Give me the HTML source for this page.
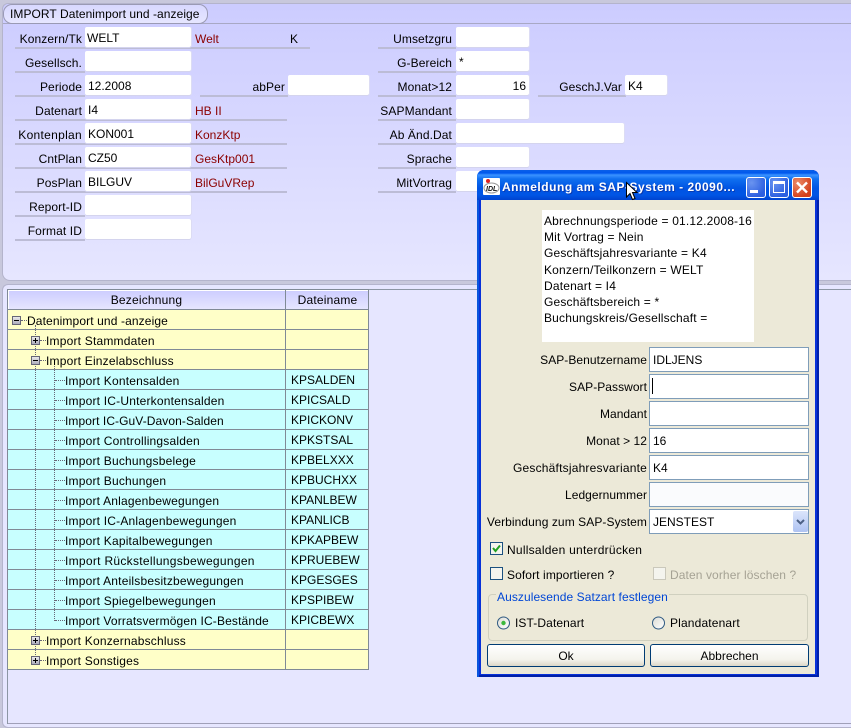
<!DOCTYPE html>
<html><head><meta charset="utf-8"><style>
html,body{margin:0;padding:0;width:851px;height:728px;overflow:hidden;background:#c8c8dc}
body{position:relative;font:12px "Liberation Sans",sans-serif;color:#000}
div,span{position:absolute;box-sizing:border-box;white-space:nowrap}
.l{height:20px;line-height:20px;text-align:right;letter-spacing:.1px}
.u{height:2px;background:#bcbcd6}
.f{height:20px;background:#fff;border-radius:2px;line-height:22px;padding-left:3px;box-shadow:0 1px 0 #d4d4ee,1px 0 0 #dcdcf4}
.r{color:#8b0000;height:20px;line-height:20px}
.row{left:8px;width:361px;height:20px;border-bottom:1px solid #808a96;line-height:20px}
.y{background:#ffffc8}.c{background:#c8ffff}
.t{height:20px;line-height:23px;letter-spacing:.2px}
.d{left:291px;height:20px;line-height:21px}
.dl{text-align:right;height:20px;line-height:22px;letter-spacing:.05px}
.tf{left:649px;width:160px;height:25px;background:#fff;border:1px solid #7f9db9;line-height:25px;padding-left:3px}
.h{border-top:1px dotted #667;width:10px}
</style></head><body>
<!-- top panel -->
<div style="left:2px;top:3px;width:849px;height:278px;background:linear-gradient(#ccccff,#e6e6ff);border:1px solid #b4b4cc;border-right:0;border-radius:6px 0 0 8px"></div>
<div style="left:3px;top:23px;width:848px;height:1px;background:#a8a8c4"></div>
<div style="left:3px;top:4px;width:205px;height:20px;background:linear-gradient(#d8d8ff,#e6e6ff);border:1px solid #9a9ab4;border-radius:9px;line-height:19px;padding-left:6px;letter-spacing:.06px">IMPORT Datenimport und -anzeige</div>

<div class="u" style="left:15px;top:47px;width:295px"></div><div class="u" style="left:15px;top:71px;width:70px"></div><div class="u" style="left:15px;top:95px;width:70px"></div><div class="u" style="left:200px;top:95px;width:88px"></div><div class="u" style="left:15px;top:119px;width:272px"></div><div class="u" style="left:15px;top:143px;width:272px"></div><div class="u" style="left:15px;top:167px;width:272px"></div><div class="u" style="left:15px;top:191px;width:272px"></div><div class="u" style="left:15px;top:215px;width:70px"></div><div class="u" style="left:15px;top:239px;width:70px"></div>

<div class="l" style="left:0;width:82px;top:29px">Konzern/Tk</div><div class="f" style="left:85px;top:27px;width:106px;padding-left:2px">WELT</div><div class="r" style="left:195px;top:29px">Welt</div><div class="l" style="left:290px;top:29px">K</div>
<div class="l" style="left:0;width:82px;top:53px">Gesellsch.</div><div class="f" style="left:85px;top:51px;width:106px"></div>
<div class="l" style="left:0;width:82px;top:77px">Periode</div><div class="f" style="left:85px;top:75px;width:106px">12.2008</div>
<div class="l" style="left:200px;width:85px;top:77px">abPer</div><div class="f" style="left:288px;top:75px;width:81px"></div>
<div class="l" style="left:0;width:82px;top:101px">Datenart</div><div class="f" style="left:85px;top:99px;width:106px">I4</div><div class="r" style="left:195px;top:101px">HB II</div>
<div class="l" style="left:0;width:82px;top:125px;letter-spacing:.3px">Kontenplan</div><div class="f" style="left:85px;top:123px;width:106px">KON001</div><div class="r" style="left:195px;top:125px">KonzKtp</div>
<div class="l" style="left:0;width:82px;top:149px">CntPlan</div><div class="f" style="left:85px;top:147px;width:106px">CZ50</div><div class="r" style="left:195px;top:149px">GesKtp001</div>
<div class="l" style="left:0;width:82px;top:173px">PosPlan</div><div class="f" style="left:85px;top:171px;width:106px">BILGUV</div><div class="r" style="left:195px;top:173px">BilGuVRep</div>
<div class="l" style="left:0;width:82px;top:197px">Report-ID</div><div class="f" style="left:85px;top:195px;width:106px"></div>
<div class="l" style="left:0;width:82px;top:221px">Format ID</div><div class="f" style="left:85px;top:219px;width:106px"></div>

<div class="u" style="left:378px;top:47px;width:78px"></div><div class="u" style="left:378px;top:71px;width:78px"></div><div class="u" style="left:378px;top:95px;width:78px"></div><div class="u" style="left:538px;top:95px;width:88px"></div><div class="u" style="left:378px;top:119px;width:78px"></div><div class="u" style="left:378px;top:143px;width:78px"></div><div class="u" style="left:378px;top:167px;width:78px"></div><div class="u" style="left:378px;top:191px;width:78px"></div>
<div class="l" style="left:370px;width:82px;top:29px">Umsetzgru</div><div class="f" style="left:456px;top:27px;width:73px"></div>
<div class="l" style="left:370px;width:82px;top:53px">G-Bereich</div><div class="f" style="left:456px;top:51px;width:73px">*</div>
<div class="l" style="left:370px;width:82px;top:77px">Monat&gt;12</div><div class="f" style="left:456px;top:75px;width:73px;text-align:right;padding-right:3px">16</div>
<div class="l" style="left:540px;width:82px;top:77px">GeschJ.Var</div><div class="f" style="left:625px;top:75px;width:42px">K4</div>
<div class="l" style="left:370px;width:82px;top:101px">SAPMandant</div><div class="f" style="left:456px;top:99px;width:73px"></div>
<div class="l" style="left:370px;width:82px;top:125px">Ab Änd.Dat</div><div class="f" style="left:456px;top:123px;width:168px"></div>
<div class="l" style="left:370px;width:82px;top:149px">Sprache</div><div class="f" style="left:456px;top:147px;width:73px"></div>
<div class="l" style="left:370px;width:82px;top:173px">MitVortrag</div><div class="f" style="left:456px;top:171px;width:73px"></div>

<!-- bottom panel -->
<div style="left:2px;top:284px;width:849px;height:444px;background:#e6e6ff;border:1px solid #b4b4cc;border-right:0;border-radius:6px 0 0 6px"></div>
<div style="left:7px;top:723px;width:844px;height:1px;background:#a0a0b8"></div>
<div style="left:7px;top:289px;width:1px;height:435px;background:#8c96a4"></div>
<div style="left:7px;top:289px;width:844px;height:1px;background:#8c96a4"></div>

<!-- table -->
<div style="left:7px;top:289px;width:362px;height:21px;background:linear-gradient(#ccccff,#e6e6ff);border:1px solid #808a96;box-shadow:inset 1px 1px 0 #fff"></div>
<div style="left:8px;width:277px;top:290px;height:20px;line-height:21px;text-align:center;letter-spacing:.2px">Bezeichnung</div>
<div style="left:286px;width:83px;top:290px;height:20px;line-height:21px;text-align:center;letter-spacing:.2px">Dateiname</div>

<div class="row y" style="top:310px"></div><div class="row y" style="top:330px"></div><div class="row y" style="top:350px"></div>
<div class="row c" style="top:370px"></div><div class="row c" style="top:390px"></div><div class="row c" style="top:410px"></div><div class="row c" style="top:430px"></div><div class="row c" style="top:450px"></div><div class="row c" style="top:470px"></div><div class="row c" style="top:490px"></div><div class="row c" style="top:510px"></div><div class="row c" style="top:530px"></div><div class="row c" style="top:550px"></div><div class="row c" style="top:570px"></div><div class="row c" style="top:590px"></div><div class="row c" style="top:610px"></div>
<div class="row y" style="top:630px"></div><div class="row y" style="top:650px"></div>
<div style="left:7px;top:310px;width:1px;height:360px;background:#808a96"></div>
<div style="left:285px;top:290px;width:1px;height:380px;background:#808a96"></div>
<div style="left:368px;top:290px;width:1px;height:380px;background:#808a96"></div>

<!-- tree lines -->
<div style="left:35px;top:325px;height:336px;border-left:1px dotted #667"></div>
<div style="left:54px;top:366px;height:255px;border-left:1px dotted #667"></div>
<div class="h" style="left:21px;top:320px;width:6px"></div>
<div class="h" style="left:40px;top:340px;width:6px"></div>
<div class="h" style="left:40px;top:360px;width:6px"></div>
<div class="h" style="left:40px;top:640px;width:6px"></div>
<div class="h" style="left:40px;top:660px;width:6px"></div>
<div class="h" style="left:55px;top:380px"></div><div class="h" style="left:55px;top:400px"></div><div class="h" style="left:55px;top:420px"></div><div class="h" style="left:55px;top:440px"></div><div class="h" style="left:55px;top:460px"></div><div class="h" style="left:55px;top:480px"></div><div class="h" style="left:55px;top:500px"></div><div class="h" style="left:55px;top:520px"></div><div class="h" style="left:55px;top:540px"></div><div class="h" style="left:55px;top:560px"></div><div class="h" style="left:55px;top:580px"></div><div class="h" style="left:55px;top:600px"></div><div class="h" style="left:55px;top:620px"></div>

<svg style="position:absolute;left:0;top:0" width="100" height="728">
<defs><linearGradient id="bx" x1="0" y1="0" x2="0" y2="1"><stop offset="0" stop-color="#eee"/><stop offset="1" stop-color="#a8a8b8"/></linearGradient></defs>
<g fill="url(#bx)" stroke="#667"><rect x="12.5" y="316.5" width="8" height="8"/><rect x="31.5" y="336.5" width="8" height="8"/><rect x="31.5" y="356.5" width="8" height="8"/><rect x="31.5" y="636.5" width="8" height="8"/><rect x="31.5" y="656.5" width="8" height="8"/></g>
<path d="M14 320.5h5M33 340.5h5M35.500 338v5M33 360.500h5M33 640.500h5M35.500 638v5M33 660.500h5M35.500 658v5" stroke="#000" fill="none"/>
</svg>

<div class="t" style="left:27px;top:310px;letter-spacing:.12px">Datenimport und -anzeige</div>
<div class="t" style="left:46px;top:330px">Import Stammdaten</div>
<div class="t" style="left:46px;top:350px">Import Einzelabschluss</div>
<div class="t" style="left:65px;top:370px">Import Kontensalden</div><div class="d" style="top:370px">KPSALDEN</div>
<div class="t" style="left:65px;top:390px">Import IC-Unterkontensalden</div><div class="d" style="top:390px">KPICSALD</div>
<div class="t" style="left:65px;top:410px;letter-spacing:.08px">Import IC-GuV-Davon-Salden</div><div class="d" style="top:410px">KPICKONV</div>
<div class="t" style="left:65px;top:430px">Import Controllingsalden</div><div class="d" style="top:430px">KPKSTSAL</div>
<div class="t" style="left:65px;top:450px">Import Buchungsbelege</div><div class="d" style="top:450px">KPBELXXX</div>
<div class="t" style="left:65px;top:470px">Import Buchungen</div><div class="d" style="top:470px">KPBUCHXX</div>
<div class="t" style="left:65px;top:490px">Import Anlagenbewegungen</div><div class="d" style="top:490px">KPANLBEW</div>
<div class="t" style="left:65px;top:510px">Import IC-Anlagenbewegungen</div><div class="d" style="top:510px">KPANLICB</div>
<div class="t" style="left:65px;top:530px">Import Kapitalbewegungen</div><div class="d" style="top:530px">KPKAPBEW</div>
<div class="t" style="left:65px;top:550px;letter-spacing:.3px">Import Rückstellungsbewegungen</div><div class="d" style="top:550px">KPRUEBEW</div>
<div class="t" style="left:65px;top:570px">Import Anteilsbesitzbewegungen</div><div class="d" style="top:570px">KPGESGES</div>
<div class="t" style="left:65px;top:590px">Import Spiegelbewegungen</div><div class="d" style="top:590px">KPSPIBEW</div>
<div class="t" style="left:65px;top:610px;letter-spacing:.15px">Import Vorratsvermögen IC-Bestände</div><div class="d" style="top:610px">KPICBEWX</div>
<div class="t" style="left:46px;top:630px">Import Konzernabschluss</div>
<div class="t" style="left:46px;top:650px">Import Sonstiges</div>

<!-- dialog -->
<div style="left:477px;top:170px;width:342px;height:507px;background:#0831d9;border-radius:7px 7px 0 0;box-shadow:inset 2px 0 0 #0855dd,inset -2px 0 0 #0020a8,inset 0 -2px 0 #0020a8"></div>
<div style="left:477px;top:170px;width:342px;height:30px;border-radius:7px 7px 0 0;background:linear-gradient(#0a5fe8 0,#0058ee 3px,#3a93ff 5px,#0f6ff0 9px,#0054e3 18px,#0055e5 25px,#0043cf 30px)"></div>
<div style="left:481px;top:200px;width:334px;height:474px;background:#ece9d8"></div>
<svg style="position:absolute;left:483px;top:178px" width="17" height="17"><rect width="17" height="17" fill="#fff" rx="1"/><circle cx="5" cy="3" r="2" fill="#e02020"/><ellipse cx="8.500" cy="10" rx="7.500" ry="5" fill="none" stroke="#999"/><text x="3" y="13" font-family="Liberation Sans" font-size="7" font-weight="bold" font-style="italic" fill="#111">IDL</text></svg>
<div style="left:502px;top:177px;height:20px;line-height:21px;color:#fff;font-weight:bold;font-size:12px;letter-spacing:.52px;text-shadow:1px 1px 0 #0a3bb0">Anmeldung am SAP-System - 20090...</div>

<div style="left:746px;top:177px;width:20px;height:21px;border:1px solid #fff;border-radius:3px;background:radial-gradient(circle at 25% 25%,#6a94f0,#2c5fe0 75%)"></div>
<div style="left:750px;top:190px;width:8px;height:3px;background:#fff"></div>
<div style="left:769px;top:177px;width:20px;height:21px;border:1px solid #fff;border-radius:3px;background:radial-gradient(circle at 25% 25%,#6a94f0,#2c5fe0 75%)"></div>
<div style="left:773px;top:181px;width:12px;height:12px;border:1px solid #fff;border-top-width:3px"></div>
<div style="left:792px;top:177px;width:20px;height:21px;border:1px solid #fff;border-radius:3px;background:radial-gradient(circle at 25% 25%,#ec8a68,#d2401c 75%)"></div>
<svg style="position:absolute;left:792px;top:177px" width="20" height="21"><path d="M5 5.500L15 15.500M15 5.500L5 15.500" stroke="#fff" stroke-width="2.400"/></svg>

<div style="left:542px;top:210px;width:212px;height:132px;background:#fff"></div>
<div style="left:544px;top:212px;line-height:16.2px;letter-spacing:.18px;padding-top:1px">Abrechnungsperiode = 01.12.2008-16<br>Mit Vortrag = Nein<br>Geschäftsjahresvariante = K4<br>Konzern/Teilkonzern = WELT<br>Datenart = I4<br>Geschäftsbereich = *<br>Buchungskreis/Gesellschaft =</div>

<div class="dl" style="left:480px;width:167px;top:349px">SAP-Benutzername</div><div class="tf" style="top:347px">IDLJENS</div>
<div class="dl" style="left:480px;width:167px;top:376px">SAP-Passwort</div><div class="tf" style="top:374px"></div><div style="left:652px;top:378px;width:1px;height:16px;background:#000"></div>
<div class="dl" style="left:480px;width:167px;top:403px">Mandant</div><div class="tf" style="top:401px"></div>
<div class="dl" style="left:480px;width:167px;top:430px">Monat &gt; 12</div><div class="tf" style="top:428px">16</div>
<div class="dl" style="left:480px;width:167px;top:457px;letter-spacing:.2px">Geschäftsjahresvariante</div><div class="tf" style="top:455px">K4</div>
<div class="dl" style="left:480px;width:167px;top:484px">Ledgernummer</div><div class="tf" style="top:482px;background:#fafbfd"></div>
<div class="dl" style="left:480px;width:167px;top:511px;letter-spacing:.08px">Verbindung zum SAP-System</div><div class="tf" style="top:509px">JENSTEST</div>
<div style="left:793px;top:511px;width:15px;height:21px;background:linear-gradient(#dbe5fb,#afc3f2);border-radius:2px"></div>
<svg style="position:absolute;left:793px;top:511px" width="15" height="21"><path d="M4 9l3.500 3.500L11 9" fill="none" stroke="#4d6185" stroke-width="2"/></svg>

<div style="left:490px;top:542px;width:13px;height:13px;background:#f4f4ee;border:1px solid #1c5180"></div>
<svg style="position:absolute;left:490px;top:542px" width="13" height="13"><path d="M3 6l2.500 3L10 3.500" fill="none" stroke="#21a121" stroke-width="2"/></svg>
<div style="left:507px;top:539px;height:20px;line-height:22px;letter-spacing:.25px">Nullsalden unterdrücken</div>
<div style="left:490px;top:567px;width:13px;height:13px;background:#f4f4ee;border:1px solid #1c5180"></div>
<div style="left:507px;top:564px;height:20px;line-height:22px;letter-spacing:.1px">Sofort importieren ?</div>
<div style="left:653px;top:567px;width:13px;height:13px;background:#f4f4ee;border:1px solid #cac8bb"></div>
<div style="left:670px;top:564px;height:20px;line-height:22px;color:#a5a294;letter-spacing:.1px">Daten vorher löschen ?</div>

<div style="left:488px;top:594px;width:320px;height:47px;border:1px solid #d0d0bf;border-radius:4px"></div>
<div style="left:496px;top:587px;height:20px;line-height:20px;background:#ece9d8;padding:0 1px;color:#0046d5;letter-spacing:.07px">Auszulesende Satzart festlegen</div>
<svg style="position:absolute;left:495px;top:612px" width="170" height="20"><defs><linearGradient id="rg" x1="0" y1="0" x2="1" y2="1"><stop offset="0" stop-color="#dcdcd4"/><stop offset="1" stop-color="#fff"/></linearGradient></defs><circle cx="8.500" cy="11" r="6" fill="url(#rg)" stroke="#2f5a82"/><circle cx="8.500" cy="11" r="2.200" fill="#3cb83c"/><circle cx="163.500" cy="11" r="6" fill="url(#rg)" stroke="#2f5a82"/></svg>
<div style="left:515px;top:613px;height:20px;line-height:21px;letter-spacing:.1px">IST-Datenart</div>
<div style="left:670px;top:613px;height:20px;line-height:21px;letter-spacing:.15px">Plandatenart</div>

<div style="left:487px;top:644px;width:158px;height:23px;border:1px solid #003c74;border-radius:3px;background:linear-gradient(#fff,#f4f3ec 70%,#dcd8c8);text-align:center;line-height:23px">Ok</div>
<div style="left:650px;top:644px;width:159px;height:23px;border:1px solid #003c74;border-radius:3px;background:linear-gradient(#fff,#f4f3ec 70%,#dcd8c8);text-align:center;line-height:23px">Abbrechen</div>

<svg style="position:absolute;left:625px;top:181px" width="16" height="22"><path d="M1.500 1.500V16l3.500-3.500 2.500 6 2.500-1-2.500-6H12z" fill="#fff" stroke="#000"/></svg>
</body></html>
